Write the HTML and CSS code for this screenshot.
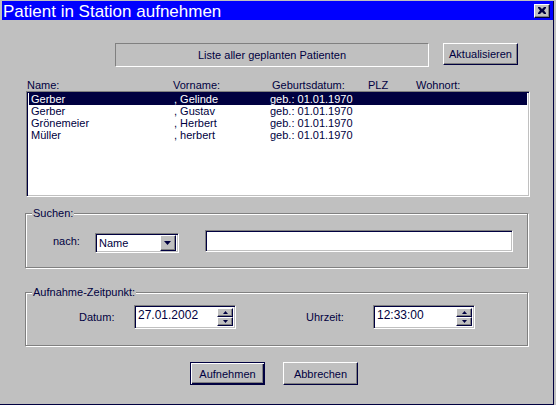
FILE: index.html
```html
<!DOCTYPE html>
<html lang="de">
<head>
<meta charset="utf-8">
<title>Patient in Station aufnehmen</title>
<link rel="stylesheet" href="styles.css">
</head>
<body>
<div class="window">
  <div class="titlebar">
    <span class="title">Patient in Station aufnehmen</span>
    <span class="closebtn"><svg width="8" height="7" viewBox="0 0 8 7"><path d="M0 0h2l2 2 2-2h2v1L6 3.5 8 6v1H6L4 5 2 7H0V6l2-2.5L0 1z" fill="#000040"/></svg></span>
  </div>
  <div class="content">
    <div class="toprow">
      <div class="panel">Liste aller geplanten Patienten</div>
      <div class="btn btn-akt">Aktualisieren</div>
    </div>
    <div class="colheads">
      <span>Name:</span><span>Vorname:</span><span>Geburtsdatum:</span><span>PLZ</span><span>Wohnort:</span>
    </div>
    <div class="listbox">
      <div class="row selected"><span>Gerber</span><span>, Gelinde</span><span>geb.: 01.01.1970</span></div>
      <div class="row"><span>Gerber</span><span>, Gustav</span><span>geb.: 01.01.1970</span></div>
      <div class="row"><span>Grönemeier</span><span>, Herbert</span><span>geb.: 01.01.1970</span></div>
      <div class="row"><span>Müller</span><span>, herbert</span><span>geb.: 01.01.1970</span></div>
    </div>
    <div class="group group-search">
      <span class="legend">Suchen:</span>
      <div class="searchrow">
        <span class="lbl lbl-nach">nach:</span>
        <div class="combo"><span class="combo-text">Name</span><span class="combo-btn"><svg width="7" height="4" viewBox="0 0 7 4"><path d="M0 0h7L3.5 4z" fill="#000040"/></svg></span></div>
        <div class="field searchfield"></div>
      </div>
    </div>
    <div class="group group-time">
      <span class="legend">Aufnahme-Zeitpunkt:</span>
      <div class="timerow">
        <span class="lbl lbl-datum">Datum:</span>
        <div class="field spinfield"><span class="spintext">27.01.2002</span>
          <span class="spins"><span class="spin"><svg width="5" height="3" viewBox="0 0 5 3"><path d="M2.5 0L5 3H0z" fill="#000040"/></svg></span><span class="spin"><svg width="5" height="3" viewBox="0 0 5 3"><path d="M0 0h5L2.5 3z" fill="#000040"/></svg></span></span>
        </div>
        <span class="lbl lbl-uhr">Uhrzeit:</span>
        <div class="field spinfield"><span class="spintext">12:33:00</span>
          <span class="spins"><span class="spin"><svg width="5" height="3" viewBox="0 0 5 3"><path d="M2.5 0L5 3H0z" fill="#000040"/></svg></span><span class="spin"><svg width="5" height="3" viewBox="0 0 5 3"><path d="M0 0h5L2.5 3z" fill="#000040"/></svg></span></span>
        </div>
      </div>
    </div>
    <div class="buttonrow">
      <div class="btn btn-default">Aufnehmen</div>
      <div class="btn btn-cancel">Abbrechen</div>
    </div>
  </div>
</div>
</body>
</html>
```
FILE: styles.css
```css
html, body {
  margin: 0;
  padding: 0;
  background: #c0c0c0;
}
body {
  font-family: "Liberation Sans", Arial, sans-serif;
  font-size: 11px;
  color: #000040;
}
.window {
  width: 553px;
  height: 403px;
  background: #c0c0c0;
  border-right: 1px solid #000040;
  border-bottom: 1px solid #000040;
  box-sizing: border-box;
  width: 554px;
  height: 404px;
}
.titlebar {
  margin: 1px 0 0 2px;
  height: 19px;
  background: #0000ff;
  display: flex;
  align-items: center;
  justify-content: space-between;
  padding-right: 3px;
}
.title {
  color: #fff;
  font-size: 17px;
  line-height: 19px;
  padding-left: 1px;
  padding-top: 1px;
}
.closebtn {
  width: 16px;
  height: 14px;
  box-sizing: border-box;
  background: #c0c0c0;
  border-top: 1px solid #fff;
  border-left: 1px solid #fff;
  border-right: 1px solid #000040;
  border-bottom: 1px solid #000040;
  box-shadow: inset -1px -1px #808080;
  display: flex;
  align-items: center;
  justify-content: center;
  margin-top: 1px;
}
.closebtn svg { display: block; margin: 0 1px 1px 0; }
.content {
  display: flex;
  flex-direction: column;
}
.toprow {
  display: flex;
  margin-top: 23px;
}
.panel {
  margin-left: 115px;
  width: 314px;
  height: 24px;
  box-sizing: border-box;
  border-top: 1px solid #808080;
  border-left: 1px solid #808080;
  border-right: 1px solid #fff;
  border-bottom: 1px solid #fff;
  display: flex;
  align-items: center;
  justify-content: center;
}
.btn {
  box-sizing: border-box;
  width: 75px;
  height: 23px;
  background: #c0c0c0;
  border-top: 1px solid #fff;
  border-left: 1px solid #fff;
  border-right: 1px solid #000040;
  border-bottom: 1px solid #000040;
  box-shadow: inset -1px -1px #808080;
  display: flex;
  align-items: center;
  justify-content: center;
}
.btn-akt {
  margin-left: 14px;
  height: 22px;
}
.colheads {
  margin-top: 12px;
  padding-left: 27px;
  display: grid;
  grid-template-columns: 146px 99px 96px 48px auto;
  height: 12px;
  line-height: 12px;
}
.listbox {
  margin-left: 26px;
  width: 504px;
  height: 106px;
  box-sizing: border-box;
  background: #fff;
  border-top: 1px solid #808080;
  border-left: 1px solid #808080;
  border-right: 1px solid #fff;
  border-bottom: 1px solid #fff;
  box-shadow: inset 1px 1px #000040, inset -1px -1px #c0c0c0;
  padding: 1px 2px 2px 2px;
}
.row {
  display: grid;
  grid-template-columns: 143px 96px auto;
  height: 12px;
  line-height: 12px;
  padding-left: 2px;
}
.row.selected {
  background: #000040;
  color: #fff;
}
.group {
  position: relative;
  margin-left: 25px;
  width: 503px;
  box-sizing: border-box;
  border: 1px solid #808080;
  box-shadow: inset 1px 1px #fff, 1px 1px #fff;
}
.legend {
  position: absolute;
  top: -7px;
  left: 6px;
  background: #c0c0c0;
  padding: 0 1px;
  line-height: 13px;
}
.group-search {
  margin-top: 16px;
  height: 55px;
}
.group-time {
  margin-top: 24px;
  height: 54px;
}
.searchrow {
  display: flex;
  align-items: flex-start;
  margin-top: 16px;
}
.lbl { line-height: 13px; }
.lbl-nach {
  margin-left: 27px;
  margin-top: 5px;
  width: 42px;
}
.field {
  box-sizing: border-box;
  background: #fff;
  border-top: 1px solid #808080;
  border-left: 1px solid #808080;
  border-right: 1px solid #fff;
  border-bottom: 1px solid #fff;
  box-shadow: inset 1px 1px #000040, inset -1px -1px #c0c0c0;
}
.combo {
  margin-top: 3px;
  width: 84px;
  height: 20px;
  box-sizing: border-box;
  background: #fff;
  border-top: 1px solid #808080;
  border-left: 1px solid #808080;
  border-right: 1px solid #fff;
  border-bottom: 1px solid #fff;
  box-shadow: inset 1px 1px #000040, inset -1px -1px #c0c0c0;
  display: flex;
  align-items: center;
  justify-content: space-between;
  padding: 2px 2px 2px 2px;
}
.combo-text {
  line-height: 13px;
  padding-left: 1px;
}
.combo-btn {
  width: 16px;
  height: 16px;
  box-sizing: border-box;
  background: #c0c0c0;
  border-top: 1px solid #fff;
  border-left: 1px solid #fff;
  border-right: 1px solid #000040;
  border-bottom: 1px solid #000040;
  box-shadow: inset -1px -1px #808080;
  display: flex;
  align-items: center;
  justify-content: center;
}
.combo-btn svg { display: block; margin: 0 1px 1px 0; }
.searchfield {
  margin-left: 26px;
  width: 308px;
  height: 22px;
}
.timerow {
  display: flex;
  align-items: flex-start;
  margin-top: 12px;
}
.lbl-datum {
  margin-left: 53px;
  margin-top: 6px;
  width: 55px;
}
.lbl-uhr {
  margin-left: 70px;
  margin-top: 6px;
  width: 67px;
}
.spinfield {
  width: 102px;
  height: 24px;
  display: flex;
  justify-content: space-between;
  padding: 2px 2px 2px 3px;
}
.spintext {
  line-height: 15px;
  font-size: 12px;
}
.spins {
  display: flex;
  flex-direction: column;
  justify-content: space-between;
  width: 16px;
}
.spin {
  height: 9px;
  box-sizing: border-box;
  background: #c0c0c0;
  border-top: 1px solid #fff;
  border-left: 1px solid #fff;
  border-right: 1px solid #000040;
  border-bottom: 1px solid #000040;
  box-shadow: inset -1px -1px #808080;
  display: flex;
  align-items: center;
  justify-content: center;
}
.spin svg { display: block; }
.buttonrow {
  display: flex;
  margin-top: 16px;
  padding-left: 190px;
}
.btn-default {
  border: 1px solid #000040;
  box-shadow: inset 1px 1px #fff, inset -1px -1px #000040, inset -2px -2px #808080;
}
.btn-cancel {
  margin-left: 18px;
}
```
